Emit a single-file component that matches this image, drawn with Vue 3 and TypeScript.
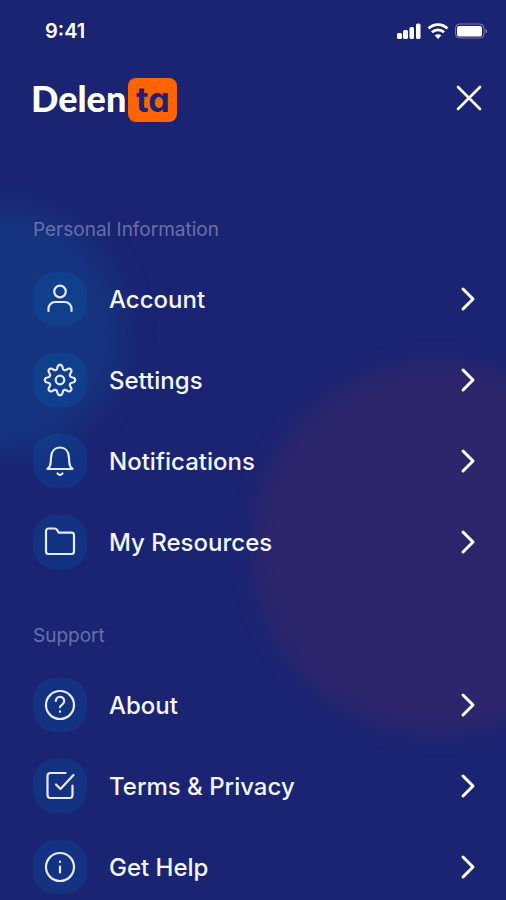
<script setup lang="ts">
type IconName = 'user' | 'gear' | 'bell' | 'folder' | 'question' | 'check' | 'info'

interface MenuItem {
  label: string
  icon: IconName
}

interface MenuSection {
  id: string
  title: string
  items: MenuItem[]
}

const sections: MenuSection[] = [
  {
    id: 'personal',
    title: 'Personal Information',
    items: [
      { label: 'Account', icon: 'user' },
      { label: 'Settings', icon: 'gear' },
      { label: 'Notifications', icon: 'bell' },
      { label: 'My Resources', icon: 'folder' },
    ],
  },
  {
    id: 'support',
    title: 'Support',
    items: [
      { label: 'About', icon: 'question' },
      { label: 'Terms & Privacy', icon: 'check' },
      { label: 'Get Help', icon: 'info' },
    ],
  },
]

// Outline of the eight-tooth gear: a closed smooth curve whose radius swings between tooth and gap.
function gearPath(cx: number, cy: number): string {
  const points: string[] = []
  const steps = 160
  for (let i = 0; i < steps; i++) {
    const angle = (i / steps) * Math.PI * 2
    const wave = Math.cos(angle * 8)
    const radius = 13 + 2.5 * Math.tanh(wave * 1.3)
    points.push(`${(cx + radius * Math.cos(angle)).toFixed(2)} ${(cy + radius * Math.sin(angle)).toFixed(2)}`)
  }
  return `M${points.join('L')}Z`
}

const iconPaths: Record<IconName, string[]> = {
  user: [
    'M18 4.700a5.800 5.800 0 1 1 0 11.600a5.800 5.800 0 1 1 0-11.600z',
    'M6.500 30v-2.500a6.500 6.500 0 0 1 6.500-6.500h10a6.500 6.500 0 0 1 6.500 6.500v2.500',
  ],
  gear: [gearPath(18, 18), 'M18 13.700a4.300 4.300 0 1 1 0 8.600a4.300 4.300 0 1 1 0-8.600z'],
  bell: [
    'M5.500 26h25c-2-1.500-3-3.500-3.200-6.500l-.4-5.500c-.4-6-4-9.500-8.900-9.500s-8.500 3.500-8.900 9.500l-.4 5.500c-.2 3-1.200 5-3.200 6.500z',
    'M15.500 30.500c1 1.700 4 1.700 5 0',
  ],
  folder: [
    'M6.500 4.500h6c1 0 1.800.4 2.300 1.200l2 3h12.700a2.500 2.500 0 0 1 2.500 2.500v16.300a2.500 2.500 0 0 1-2.500 2.500h-23a2.500 2.500 0 0 1-2.500-2.500v-20.500a2.500 2.500 0 0 1 2.500-2.500z',
  ],
  question: [
    'M18 4a14 14 0 1 1 0 28a14 14 0 1 1 0-28z',
    'M13.800 14a4.200 4.200 0 1 1 6.500 3.500c-1.500 1-2.300 1.500-2.300 2.800',
    'M18 24.400v.4',
  ],
  check: [
    'M23.500 5h-15a3 3 0 0 0-3 3v19a3 3 0 0 0 3 3h19a3 3 0 0 0 3-3v-9.500',
    'M14 16.500l4.500 4.500l13-14',
  ],
  info: [
    'M18 4a14 14 0 1 1 0 28a14 14 0 1 1 0-28z',
    'M18 17.500v6',
    'M18 12.500v.5',
  ],
}
</script>

<template>
  <div class="screen">
    <div class="glow glow-blue" aria-hidden="true"></div>
    <div class="glow glow-plum" aria-hidden="true"></div>

    <div class="status">
      <time class="clock">9:41</time>
      <div class="status-icons" aria-hidden="true">
        <svg width="26" height="18" viewBox="0 0 26 18" fill="#fff">
          <rect x="1" y="11" width="5" height="6" rx="1.500" />
          <rect x="7" y="8" width="5" height="9" rx="1.500" />
          <rect x="13.500" y="5" width="4.500" height="12" rx="1.500" />
          <rect x="20" y="1.500" width="4.500" height="15.500" rx="1.500" />
        </svg>
        <svg width="22" height="18" viewBox="0 0 22 18" fill="none" stroke="#fff" stroke-width="2.800">
          <path d="M1.500 6.500a13.500 13.500 0 0 1 19 0" />
          <path d="M5 10.300a8.500 8.500 0 0 1 12 0" />
          <path d="M11 17l-3.300-3.500a4.700 4.700 0 0 1 6.600 0z" fill="#fff" stroke="none" />
        </svg>
        <svg width="34" height="18" viewBox="0 0 34 18">
          <rect x="1.500" y="2" width="28.500" height="14" rx="4" fill="none" stroke="#fff" stroke-opacity=".4" />
          <rect x="3" y="4" width="25" height="10.500" rx="2" fill="#fff" />
          <path d="M31.500 7v4.500c2-.8 2-3.700 0-4.500z" fill="#fff" fill-opacity=".45" />
        </svg>
      </div>
    </div>

    <header class="header">
      <a class="logo" href="#" aria-label="Delenta"><span class="logo-word">Delen</span><span class="logo-tile">ta</span></a>
      <button class="close" type="button" aria-label="Close menu">
        <svg width="28" height="28" viewBox="0 0 28 28" fill="none" stroke="#fff" stroke-width="2.600" stroke-linecap="round">
          <path d="M3 3l22 22M25 3l-22 22" />
        </svg>
      </button>
    </header>

    <nav class="menu">
      <section v-for="section in sections" :key="section.id" :aria-labelledby="section.id">
        <h2 :id="section.id" class="title">{{ section.title }}</h2>
        <ul class="list">
          <li v-for="item in section.items" :key="item.label">
            <a class="row" href="#">
              <span class="chip">
                <svg width="36" height="36" viewBox="0 0 36 36" aria-hidden="true">
                  <path v-for="d in iconPaths[item.icon]" :key="d" :d="d" />
                </svg>
              </span>
              <span class="label">{{ item.label }}</span>
              <svg class="chevron" width="16" height="26" viewBox="0 0 16 26" aria-hidden="true">
                <path d="M3 3l10 10l-10 10" />
              </svg>
            </a>
          </li>
        </ul>
      </section>
    </nav>
  </div>
</template>

<style>
body {
  margin: 0;
  background: #1a2472;
}
</style>

<style scoped>
.screen {
  position: relative;
  box-sizing: border-box;
  min-height: 100vh;
  padding-bottom: 6px;
  overflow: hidden;
  background: #1a2472;
  color: #fff;
  font-family: Inter, "Liberation Sans", sans-serif;
}

.glow {
  position: absolute;
  border-radius: 50%;
}

.glow-blue {
  top: 206px;
  left: -124px;
  width: 248px;
  height: 248px;
  background: #16347f;
  filter: blur(14px);
}

.glow-plum {
  top: 362px;
  right: -118px;
  width: 372px;
  height: 372px;
  background: #2d266c;
  filter: blur(10px);
}

.status,
.header,
.menu {
  position: relative;
}

.status {
  display: flex;
  align-items: center;
  justify-content: space-between;
  height: 62px;
  padding: 0 18px 0 45px;
}

.clock {
  font-size: 20px;
  font-weight: 600;
  line-height: 24px;
}

.status-icons {
  display: flex;
  align-items: center;
  gap: 5px;
}

.header {
  display: flex;
  align-items: flex-start;
  justify-content: space-between;
  padding: 16px 23px 0 31px;
}

.logo {
  display: flex;
  align-items: flex-start;
  gap: 2px;
  color: #fff;
  text-decoration: none;
}

.logo-word {
  font-family: Lato, sans-serif;
  font-size: 36px;
  font-weight: 900;
  line-height: 40px;
}

.logo-tile {
  width: 49px;
  border-radius: 8px;
  background: #ff6400;
  color: #1a2472;
  font-size: 34px;
  font-weight: 700;
  line-height: 44px;
  text-align: center;
  font-feature-settings: "cv11";
}

.close {
  display: flex;
  margin-top: 6px;
  padding: 0;
  border: 0;
  background: none;
  cursor: pointer;
}

.menu {
  display: flex;
  flex-direction: column;
  gap: 55px;
  padding: 96px 30px 0 33px;
}

.title {
  margin: 0 0 30px;
  color: #6870a8;
  font-size: 19px;
  font-weight: 400;
  line-height: 24px;
}

.list {
  display: flex;
  flex-direction: column;
  gap: 27px;
  margin: 0;
  padding: 0;
  list-style: none;
}

.row {
  display: flex;
  align-items: center;
  gap: 22px;
  color: #f4f6ff;
  text-decoration: none;
}

.chip {
  display: flex;
  align-items: center;
  justify-content: center;
  width: 54px;
  height: 54px;
  border-radius: 22px;
  background: rgba(0, 96, 176, 0.26);
}

.chip path {
  fill: none;
  stroke: #e6e9ff;
  stroke-width: 2.200;
  stroke-linecap: round;
  stroke-linejoin: round;
}

.label {
  flex: 1;
  padding-top: 2px;
  font-size: 24px;
  font-weight: 500;
  line-height: 30px;
}

.chevron path {
  fill: none;
  stroke: #fff;
  stroke-width: 3;
  stroke-linecap: round;
  stroke-linejoin: round;
}
</style>
